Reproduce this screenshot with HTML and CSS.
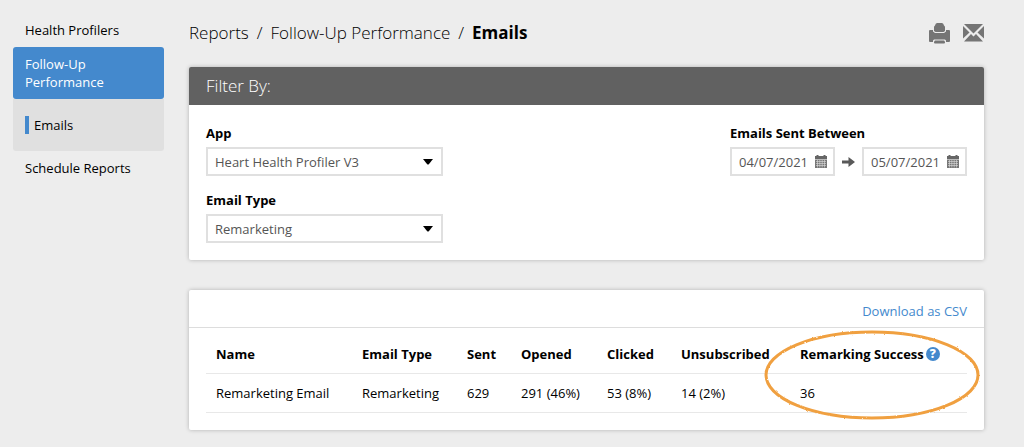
FILE: index.html
```html
<!DOCTYPE html>
<html lang="en">
<head>
<meta charset="utf-8">
<meta name="viewport" content="width=device-width, initial-scale=1">
<title>Reports – Emails</title>
<link rel="stylesheet" href="styles.css">
</head>
<body>
<div class="page">
  <nav class="sidebar" aria-label="Reports">
    <a class="nav-item" href="#">Health Profilers</a>
    <a class="nav-item nav-active" href="#">Follow-Up<br>Performance</a>
    <div class="subnav"><a class="subnav-item" href="#">Emails</a></div>
    <a class="nav-item" href="#">Schedule Reports</a>
  </nav>
  <main class="main">
    <header class="topbar">
      <h1 class="crumbs"><a href="#">Reports</a><span>/</span><a href="#">Follow-Up Performance</a><span>/</span><b>Emails</b></h1>
      <div class="actions">
        <button class="icon-button" type="button" aria-label="Print">
          <svg width="21" height="21" viewBox="0 0 21 21" fill="#757575"><path d="M5 8V4Q5 3 6 2.500Q6.500 0 8 0H13Q14.500 0 15 2.500Q16 3 16 4V8L14.500 9H6.500Z"/><path d="M0 8Q0 7 1 7H4V8.500L6 10H15L17 8.500V7H20Q21 7 21 8V18Q21 19 20 19H17V17.500L16 16.500H5L4 17.500V19H1Q0 19 0 18Z"/><path d="M5 18.500L6 17.500H15L16 18.500V19.500Q16 20.500 15 20.500H6Q5 20.500 5 19.500Z"/></svg>
        </button>
        <button class="icon-button" type="button" aria-label="Email">
          <svg width="21" height="18" viewBox="0 0 21 18" fill="#757575"><path d="M1 0H20L10.500 9.500Z"/><path d="M0 2L6.500 8.500L0 14.500Z"/><path d="M21 2L14.500 8.500L21 14.500Z"/><path d="M1 17.500L8 10L10.500 12.500L13 10L20 17.500Z"/></svg>
        </button>
      </div>
    </header>
    <section class="card">
      <h2 class="card-title">Filter By:</h2>
      <form class="filters">
        <div class="fields">
          <div class="field">
            <label for="app">App</label>
            <div class="select-wrap">
              <select id="app"><option>Heart Health Profiler V3</option></select>
              <svg class="caret" width="10" height="6" viewBox="0 0 10 6"><path d="M0 0H10L6 5Q5 6 4 5Z"/></svg>
            </div>
          </div>
          <div class="field">
            <label for="type">Email Type</label>
            <div class="select-wrap">
              <select id="type"><option>Remarketing</option></select>
              <svg class="caret" width="10" height="6" viewBox="0 0 10 6"><path d="M0 0H10L6 5Q5 6 4 5Z"/></svg>
            </div>
          </div>
        </div>
        <div class="field">
          <label for="from">Emails Sent Between</label>
          <div class="range">
            <div class="date">
              <input id="from" type="text" value="04/07/2021">
              <svg width="12" height="13" viewBox="0 0 12 13"><path fill="#666" d="M0 1H1.500V0H3.500V1H8.500V0H10.500V1H12V4H0Z"/><path fill="#777" d="M0 4.500H12V13H0Z"/><path stroke="#ddd" stroke-width=".6" d="M1 6.500H11M1 8.500H11M1 10.500H11M2.500 5V12.500M4.800 5V12.500M7.200 5V12.500M9.500 5V12.500"/></svg>
            </div>
            <svg width="13" height="10" viewBox="0 0 13 10" fill="#595959"><path d="M0 3.500H6.500V0L13 5L6.500 10V6.500H0Z"/></svg>
            <div class="date">
              <input type="text" value="05/07/2021" aria-label="End date">
              <svg width="12" height="13" viewBox="0 0 12 13"><path fill="#666" d="M0 1H1.500V0H3.500V1H8.500V0H10.500V1H12V4H0Z"/><path fill="#777" d="M0 4.500H12V13H0Z"/><path stroke="#ddd" stroke-width=".6" d="M1 6.500H11M1 8.500H11M1 10.500H11M2.500 5V12.500M4.800 5V12.500M7.200 5V12.500M9.500 5V12.500"/></svg>
            </div>
          </div>
        </div>
      </form>
    </section>
    <section class="card results">
      <div class="toolbar"><a href="#">Download as CSV</a></div>
      <div class="table-wrap">
        <table>
          <colgroup><col class="c-name"><col class="c-type"><col class="c-sent"><col class="c-opened"><col class="c-clicked"><col class="c-unsub"><col></colgroup>
          <thead><tr><th>Name</th><th>Email Type</th><th>Sent</th><th>Opened</th><th>Clicked</th><th>Unsubscribed</th><th><span class="with-help">Remarking Success <button class="help" type="button" aria-label="Help">?</button></span></th></tr></thead>
          <tbody><tr><td>Remarketing Email</td><td>Remarketing</td><td>629</td><td>291 (46%)</td><td>53 (8%)</td><td>14 (2%)</td><td>36</td></tr></tbody>
        </table>
      </div>
      <svg class="highlight" width="216" height="90" viewBox="0 0 216 90" fill="none" stroke="#f0a040">
        <defs><filter id="rough"><feTurbulence type="fractalNoise" baseFrequency=".4" numOctaves="2" result="n"/><feDisplacementMap in="SourceGraphic" in2="n" scale="2" xChannelSelector="R" yChannelSelector="G"/></filter></defs>
        <ellipse cx="108" cy="45" rx="106" ry="43" stroke-width="3" filter="url(#rough)"/>
      </svg>
    </section>
  </main>
</div>
</body>
</html>
```
FILE: styles.css
```css
* { box-sizing: border-box; }
body { margin: 0; background: #ededed; color: #000; font: 13px/18px "Open Sans", "Noto Sans", sans-serif; }
a { color: inherit; text-decoration: none; }
button { border: 0; padding: 0; background: none; cursor: pointer; }
svg { display: block; flex: none; }
.page { display: flex; gap: 25px; padding: 13px 40px 16px 13px; }
.sidebar { flex: 0 0 151px; display: flex; flex-direction: column; }
.nav-item { padding: 8px 12px; }
.nav-active { background: #4489cd; color: #fff; border-radius: 3px; }
.subnav { background: #e0e0e0; padding: 17px 12px; border-radius: 0 0 3px 3px; }
.subnav-item { display: block; border-left: 4px solid #4489cd; padding-left: 5px; }
.main { flex: 1; min-width: 0; }
.topbar { display: flex; justify-content: space-between; align-items: center; height: 40px; margin-bottom: 14px; }
.crumbs { display: flex; gap: 8px; margin: 0; font-size: 17px; line-height: 24px; font-weight: 300; }
.crumbs b { font-weight: 700; }
.actions { display: flex; gap: 13px; align-items: center; }
.card { position: relative; background: #fff; border-radius: 2px; box-shadow: 0 0 4px rgba(0, 0, 0, .25); }
.card-title { margin: 0; padding: 7px 17px; background: #616161; color: #fff; border-radius: 2px 2px 0 0; font-size: 17px; line-height: 24px; font-weight: 300; }
.filters { display: flex; justify-content: space-between; align-items: flex-start; padding: 19px 17px 17px; }
.fields { display: grid; gap: 15px; flex: 0 1 237px; }
.field label { display: block; font-weight: 700; margin-bottom: 5px; }
.select-wrap { position: relative; }
select { appearance: none; display: block; width: 100%; height: 29px; padding: 0 24px 0 7px; border: 2px solid #e0e0e0; border-radius: 0; background: #fff; color: #555; font: inherit; }
.caret { position: absolute; right: 10px; top: 12px; pointer-events: none; }
.range { display: flex; align-items: center; gap: 7px; }
.date { display: flex; align-items: center; justify-content: space-between; width: 105px; height: 29px; padding: 0 6px 0 7px; border: 2px solid #e0e0e0; }
.date input { width: 72px; border: 0; padding: 0; background: none; color: #555; font: inherit; }
.results { margin-top: 30px; }
.toolbar { padding: 12px 17px 7px; border-bottom: 1px solid #ddd; text-align: right; color: #4489cd; }
.table-wrap { padding: 7px 17px 17px; }
table { width: 100%; table-layout: fixed; border-collapse: collapse; }
th, td { padding: 10px; border-bottom: 1px solid #e8e8e8; text-align: left; white-space: nowrap; line-height: 18px; }
th { font-weight: 700; }
.c-name { width: 146px; }
.c-type { width: 105px; }
.c-sent { width: 54px; }
.c-opened { width: 86px; }
.c-clicked { width: 74px; }
.c-unsub { width: 119px; }
.with-help { display: flex; align-items: center; gap: 2px; }
.help { width: 14px; height: 14px; border-radius: 50%; background: #4489cd; color: #fff; font: 800 12px/14px "Open Sans", sans-serif; text-align: center; }
.highlight { position: absolute; right: 4px; top: 40px; pointer-events: none; }
```
